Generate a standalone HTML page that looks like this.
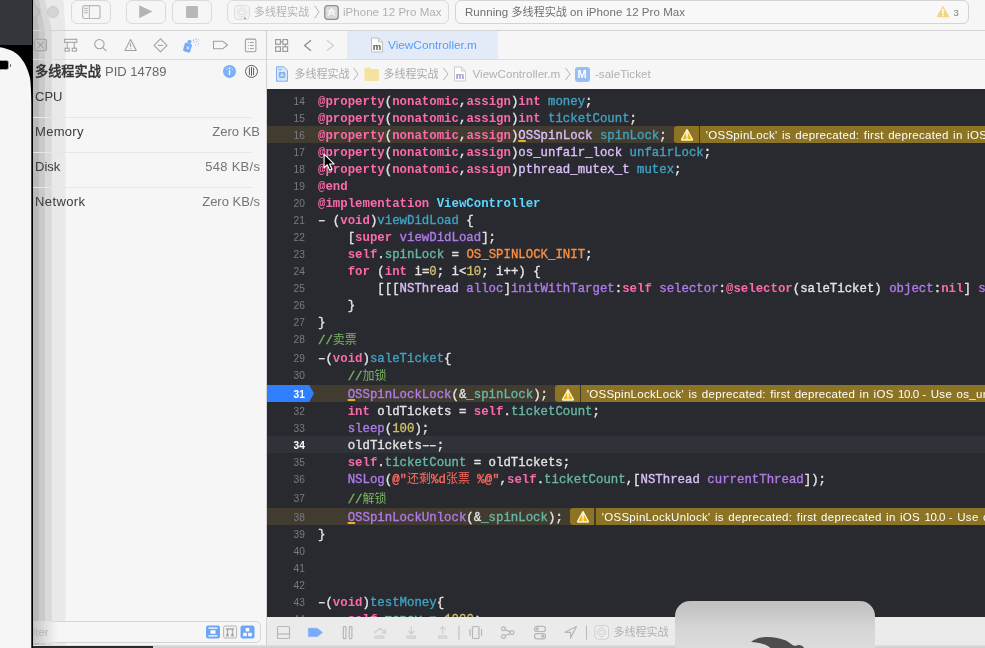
<!DOCTYPE html>
<html lang="zh">
<head>
<meta charset="utf-8">
<title>Xcode</title>
<style>
*{box-sizing:border-box;margin:0;padding:0}
html,body{width:985px;height:648px;overflow:hidden;background:#f6f6f6}
body{position:relative;font-family:"Liberation Sans","Noto Sans CJK SC",sans-serif;font-size:13px;color:#3a3a3a}
.abs{position:absolute}
/* left simulator strip */
#sim{left:0;top:0;width:33px;height:648px;background:#000}
#simtop{left:0;top:0;width:31.5px;height:44.5px;background:#35363b}
#batt{left:-2px;top:60.3px;width:10.5px;height:9.4px;background:#000;border:1px solid #a6a6a6;border-radius:2.5px}
/* window */
#win{left:33px;top:0;width:952px;height:648px;background:#f6f6f6}
.hl{background:#d4d4d4;height:1px}
.btn{border:1px solid #dadada;border-radius:6px;top:-0.5px;height:24px;background:#f6f6f6}
.tl{width:12px;height:12px;border-radius:50%;background:#d4d4d4;border:1px solid #cacaca;top:6px}
.t11{font-size:11px;white-space:nowrap}
.nav{font-size:13px;white-space:nowrap;line-height:16px}
.val{color:#757575;text-align:right;right:725px}
/* editor */
#ed{left:267px;top:89px;width:718px;height:528px;background:#292a30;overflow:hidden}
.row{left:0;width:718px;height:17px}
.ln{position:absolute;left:0;width:37.8px;text-align:right;font-family:"Liberation Sans",sans-serif;font-size:11.3px;line-height:16.4px;height:18px;color:#7a7b80;transform:scaleX(0.9);transform-origin:100% 50%}
.ln.cur{color:#fff;font-weight:bold}
.ln.bp{color:#fff;font-weight:bold}
.cl{position:absolute;left:51px;height:18px;line-height:18px;white-space:pre;font-family:"Liberation Mono","Noto Sans CJK SC",monospace;font-size:12.36px;color:#e4e4e6;-webkit-text-stroke:0.35px}
.cl span{display:inline}
.k{color:#fd6aab;font-weight:bold;-webkit-text-stroke:0}
.p{color:#e4e4e6}
.d{color:#41a1c0}
.t{color:#5dd8ff;font-weight:bold;-webkit-text-stroke:0}
.j{color:#67b7a4}
.u{color:#b07bea}
.uu{color:#b07bea;text-decoration:underline;text-decoration-color:#e2b325;text-decoration-thickness:2px;text-underline-offset:1.1px}
.c{color:#dabff8}
.cu{color:#dabff8;text-decoration:underline;text-decoration-color:#e2b325;text-decoration-thickness:2px;text-underline-offset:1.1px}
.n{color:#d0bf69}
.cl span.z{font-size:12px;-webkit-text-stroke:0}
.cl span.h{display:inline-block;transform:scaleX(1.55)}
.m{color:#fd8f3f}
.s{color:#fc6a5d}
.g{color:#7ab55c}
.wb{letter-spacing:0.3px;word-spacing:0.9px;height:17px;background:#8c7424;color:#fff;font-size:11.5px;line-height:18.2px;white-space:nowrap;overflow:hidden;font-family:"Liberation Sans",sans-serif}
.dbg{stroke:#b7b7b7;fill:none;stroke-width:1.2}
.dbl{stroke:#cecece;fill:none;stroke-width:1.2}
</style>
</head>
<body>
<div id="root" style="position:absolute;left:0;top:0;width:985px;height:648px;will-change:transform">
<!-- simulator strip on left -->
<div id="sim" class="abs"></div>
<div id="simtop" class="abs"></div>
<svg class="abs" style="left:0;top:0" width="33" height="648" viewBox="0 0 33 648"><path d="M0 47.3C4 47.9 7 48.9 10 50.1C14 51.7 17.5 54.2 20 56.9C22.5 59.6 24.5 62.9 26 66.2C27.8 70.1 29.2 74.4 30 77.8C30.8 83 31.2 92 31.3 104V648H0Z" fill="#f6f6f6"/></svg>
<div id="batt" class="abs"></div>
<div class="abs" style="left:9.8px;top:63.5px;width:1.2px;height:3px;background:#555;border-radius:0 1px 1px 0"></div>

<div id="win" class="abs"></div>
<svg class="abs" style="left:33px;top:0" width="40" height="646" viewBox="33 0 40 646">
<polygon points="33,0 63.5,0 65.4,30 65.4,646 33,646" fill="#e9e9e9"/>
<polygon points="33,0 45,0 51.8,30 51.8,646 33,646" fill="#d9d9d9"/>
<polygon points="33,0 39,0 44.9,30 44.9,646 33,646" fill="#c9c9c9"/>
<polygon points="33,0 34.5,0 38.9,30 38.9,646 33,646" fill="#b9b9b9"/>
</svg>

<!-- toolbar -->
<div class="abs" style="left:33px;top:0;width:30px;height:30px;overflow:hidden"><div class="abs tl" style="left:-5.5px;background:#bfbfbf;border-color:#b5b5b5"></div></div>
<div class="abs tl" style="left:47px"></div>
<div class="abs btn" style="left:71px;width:40px"></div>
<svg class="abs" style="left:82px;top:4px" width="19" height="16" viewBox="0 0 19 16"><rect x="0.6" y="1.6" width="17.4" height="12.9" rx="2" fill="none" stroke="#b7b7b7" stroke-width="1.2"/><path d="M7.4 1.6v12.9M2.3 4.4h3.4M2.3 6.5h3.4M2.3 8.6h3.4" stroke="#b7b7b7" stroke-width="1.1" fill="none"/></svg>
<div class="abs btn" style="left:126px;width:40px"></div>
<svg class="abs" style="left:138px;top:4px" width="16" height="16" viewBox="0 0 16 16"><path d="M1.2 1.2L14.4 7.6L1.2 14.2Z" fill="#b5b5b5"/></svg>
<div class="abs btn" style="left:172px;width:40px"></div>
<div class="abs" style="left:186px;top:6px;width:12px;height:12px;background:#b8b8b8;border-radius:1px"></div>
<div class="abs btn" style="left:227px;width:222px"></div>
<svg class="abs" style="left:234px;top:4.5px" width="16" height="15" viewBox="0 0 16 15"><rect x="0.6" y="0.6" width="14.8" height="13.8" rx="3.4" fill="#f4f4f4" stroke="#dcdcdc" stroke-width="1"/><circle cx="8" cy="7.5" r="4.6" fill="none" stroke="#dadada" stroke-width="0.9"/><circle cx="8" cy="7.5" r="2.6" fill="none" stroke="#dadada" stroke-width="0.9"/><circle cx="11" cy="13.2" r="0.7" fill="#555"/></svg>
<div class="abs t11" style="left:254px;top:4px;line-height:16px;color:#b3b3b3">多线程实战</div>
<svg class="abs" style="left:313px;top:4px" width="8" height="16" viewBox="0 0 8 16"><path d="M1.5 1.5L6 8L1.5 14.5" stroke="#b3b3b3" stroke-width="1" fill="none"/></svg>
<svg class="abs" style="left:324px;top:4.5px" width="15" height="15" viewBox="0 0 15 15"><rect x="0.7" y="0.7" width="13.6" height="13.6" rx="3" fill="#d9d9d9" stroke="#8e8e8e" stroke-width="1.3"/><path d="M4 11L7.5 3.6L11 11M5 8.6h5M3.4 6.2h8" stroke="#fafafa" stroke-width="1.2" fill="none"/></svg>
<div class="abs t11" id="dev" style="left:343px;top:4px;line-height:16px;color:#b0b0b0;font-size:11.5px;letter-spacing:0.04px">iPhone 12 Pro Max</div>
<div class="abs btn" style="left:454.6px;width:514px;top:-0.5px;height:24.2px;border-color:#d4d4d4;background:#f8f8f8"></div>
<div class="abs t11" id="run" style="left:465px;top:4px;line-height:16px;color:#707070;font-size:11.5px;letter-spacing:0.06px">Running <span style="font-size:11px">多线程实战</span> on iPhone 12 Pro Max</div>
<svg class="abs" style="left:936px;top:5px" width="14" height="13" viewBox="0 0 14 13"><path d="M7 0.8L13.2 11.6Q13.4 12.3 12.6 12.3H1.4Q0.6 12.3 0.8 11.6Z" fill="#f3d685"/><path d="M7 4.2v4.2" stroke="#fff" stroke-width="1.4" stroke-linecap="round"/><circle cx="7" cy="10.4" r="0.85" fill="#fff"/></svg>
<div class="abs" style="left:953.5px;top:6px;font-size:9.5px;line-height:14px;color:#7c7c7c">3</div>
<div class="abs hl" style="left:33px;top:30px;width:952px"></div>

<!-- navigator icon bar -->
<svg class="abs" style="left:33px;top:37px" width="234" height="18" viewBox="0 0 234 18">
<g fill="none" stroke="#a0a0a0" stroke-width="1.05">
<rect x="1.8" y="2.2" width="11.6" height="11.6" rx="1.5" fill="#c6c6c6" stroke="#9e9e9e"/><path d="M4 4.5L11 11.5M11 4.5L4 11.5" stroke="#9e9e9e"/><circle cx="7.6" cy="8" r="1" fill="#9e9e9e" stroke="none"/>
<rect x="31.6" y="2.3" width="12.2" height="3"/><path d="M34.2 5.3v6M41.2 5.3v6"/><rect x="32" y="11.2" width="4.2" height="2.9"/><rect x="39.2" y="11.2" width="4.2" height="2.9"/>
<circle cx="66.4" cy="7.1" r="4.7"/><path d="M69.8 10.6L73.4 14.2"/>
<path d="M97.6 2.4L103.3 13.4H91.9Z" stroke-linejoin="round"/><path d="M97.6 6.2v3.8M97.6 11.2v0.9"/>
<path d="M127.5 1.9L134 8.4L127.5 14.9L121 8.4Z" stroke-linejoin="round"/><path d="M125 8.4h5"/>
<path d="M180.5 4.2h9L194.5 8L189.5 11.8h-9Z" stroke-linejoin="round"/>
<rect x="212.4" y="2.1" width="10.5" height="12.6" rx="1.2"/><path d="M214.9 5.4h0.8M217.1 5.4h3.6M214.9 8.4h0.8M217.1 8.4h3.6M214.9 11.4h0.8M217.1 11.4h3.6"/>
</g>
<g><rect x="151" y="6.2" width="7.4" height="9" rx="1.4" fill="#79abf7" transform="rotate(16 155 10)"/><rect x="153.2" y="3" width="3.6" height="3" fill="#79abf7" transform="rotate(16 155 10)"/><path d="M153.6 9.5l2.6 2.8M156.2 9.5l-2.6 2.8" stroke="#fff" stroke-width="0.8"/>
<g fill="#8fb8f5"><circle cx="160.5" cy="3.2" r="0.7"/><circle cx="162.8" cy="2" r="0.7"/><circle cx="161.3" cy="5.6" r="0.7"/><circle cx="163.8" cy="4.6" r="0.7"/><circle cx="165.6" cy="2.8" r="0.6"/><circle cx="162.8" cy="8" r="0.6"/><circle cx="165.4" cy="6.8" r="0.6"/></g></g>
</svg>
<div class="abs hl" style="left:33px;top:59px;width:233px;background:#dcdcdc"></div>

<!-- navigator rows -->
<div class="abs nav" id="n1" style="left:35px;top:63.5px;font-size:13.2px;color:#333;font-weight:500;-webkit-text-stroke:0.35px #333">多线程实战</div>
<div class="abs nav" id="n2" style="left:105px;top:63.5px;color:#6a6a6a">PID 14789</div>
<svg class="abs" style="left:222px;top:64px" width="38" height="15" viewBox="0 0 38 15"><circle cx="7.5" cy="7.4" r="6.5" fill="#7db0f8"/><path d="M7.5 6.2v4.6" stroke="#fff" stroke-width="1.4"/><circle cx="7.5" cy="4.3" r="0.9" fill="#fff"/><path d="M4.2 6A3.6 3.6 0 0 1 5.6 4M9.4 4A3.6 3.6 0 0 1 10.8 6" stroke="#d4e4fc" stroke-width="0.8" fill="none"/><circle cx="29.5" cy="7.4" r="6" fill="none" stroke="#5e5e5e" stroke-width="1"/><path d="M27.4 3.6v7.6M29.5 3v8.8M31.6 3.6v7.6" stroke="#5e5e5e" stroke-width="1"/></svg>
<div class="abs nav" id="n3" style="left:35px;top:88.5px">CPU</div>
<div class="abs hl" style="left:33px;top:117px;width:219px;background:#e6e6e6"></div>
<div class="abs nav" id="n4" style="letter-spacing:0.3px;left:35px;top:123.5px">Memory</div>
<div class="abs nav val" id="v4" style="top:123.5px">Zero KB</div>
<div class="abs hl" style="left:33px;top:152px;width:219px;background:#e6e6e6"></div>
<div class="abs nav" id="n5" style="left:35px;top:158.5px">Disk</div>
<div class="abs nav val" id="v5" style="letter-spacing:0.3px;margin-right:-0.3px;top:158.5px">548 KB/s</div>
<div class="abs hl" style="left:33px;top:187px;width:219px;background:#e6e6e6"></div>
<div class="abs nav" id="n6" style="letter-spacing:0.4px;left:35px;top:193.5px">Network</div>
<div class="abs nav val" id="v6" style="top:193.5px">Zero KB/s</div>

<!-- filter field -->
<div class="abs" style="left:20px;top:621px;width:241px;height:22px;border:1px solid #d4d4d4;border-radius:5px;background:#f6f6f6;clip-path:inset(0 0 0 13px)"></div>
<div class="abs" style="left:33px;top:621px;width:25px;height:22px;background:linear-gradient(90deg,#c4c4c4,#e4e4e4 60%,rgba(246,246,246,0))"></div>
<div class="abs" id="flt" style="left:23.1px;top:624px;font-size:11.5px;line-height:16px;color:#b4b4b4;clip-path:inset(0 0 0 9.9px)">Filter</div>
<svg class="abs" style="left:205.3px;top:624px" width="52" height="16" viewBox="0 0 52 16">
<rect x="1" y="1.5" width="14" height="13" rx="2" fill="#6ea6f7"/><path d="M3.5 4.2h9M3.5 11.8h9" stroke="#fff" stroke-width="1.2"/><rect x="5.5" y="6.3" width="5" height="3.4" fill="#fff"/>
<rect x="18.6" y="2" width="13" height="12" rx="1.5" fill="#f2f2f2" stroke="#b5b5b5" stroke-width="1"/><path d="M21 5h8M22.5 5v6M27.5 5v6" stroke="#a8a8a8" stroke-width="1.3" fill="none"/><rect x="21.2" y="10" width="2.6" height="2.4" fill="#a8a8a8"/><rect x="26.2" y="10" width="2.6" height="2.4" fill="#a8a8a8"/>
<rect x="35.5" y="1.5" width="14" height="13" rx="2" fill="#6ea6f7"/><rect x="40.7" y="4" width="3.6" height="3.4" fill="#fff"/><rect x="38.2" y="8.8" width="3.6" height="3.4" fill="#fff"/><rect x="43.2" y="8.8" width="3.6" height="3.4" fill="#fff"/>
</svg>

<!-- divider nav / editor -->
<div class="abs" style="left:266px;top:31px;width:1px;height:615px;background:#d2d2d2"></div>

<!-- tab bar -->
<div class="abs" style="left:347px;top:31px;width:151px;height:28px;background:#e3ebf9"></div>
<svg class="abs" style="left:274px;top:37px" width="64" height="17" viewBox="0 0 64 17"><g fill="none" stroke="#999" stroke-width="1.15"><rect x="1.6" y="2.6" width="4.8" height="4.6"/><rect x="8.8" y="2.6" width="4.8" height="4.6"/><rect x="1.6" y="9.8" width="4.8" height="4.6"/><rect x="8.8" y="9.8" width="4.8" height="4.6"/><path d="M6.4 4.9h2.4M11.2 7.2v2.6"/></g><path d="M37 3.2L30.6 8.5L37 13.8" fill="none" stroke="#8e8e8e" stroke-width="1.3"/><path d="M53 3.2L59.4 8.5L53 13.8" fill="none" stroke="#cfcfcf" stroke-width="1.3"/></svg>
<svg class="abs" style="left:370px;top:37px" width="14" height="16" viewBox="0 0 14 16"><path d="M1.5 1h7L12.5 5V15H1.5Z" fill="#fdfdfd" stroke="#b9b9b9" stroke-width="0.9" stroke-linejoin="round"/><path d="M8.5 1V5H12.5" fill="#e9e9e9" stroke="#b9b9b9" stroke-width="0.8" stroke-linejoin="round"/><text x="7" y="13.2" text-anchor="middle" font-family="Liberation Sans,sans-serif" font-size="9.5" font-weight="bold" fill="#555">m</text></svg>
<div class="abs t11" id="tab" style="left:388px;top:37px;line-height:16px;color:#5a9bf6;font-size:11.8px">ViewController.m</div>
<div class="abs hl" style="left:267px;top:59px;width:718px;background:#dedede"></div>

<!-- jump bar -->
<svg class="abs" style="left:275px;top:66px" width="14" height="16" viewBox="0 0 14 16"><path d="M1.5 0.8h7.5L12.5 4.3V15.2H1.5Z" fill="#d7e7fb" stroke="#7fb0f4" stroke-width="1" stroke-linejoin="round"/><rect x="3.8" y="6" width="6.4" height="6" rx="1" fill="#7fb0f4"/><path d="M5 10.6L7 7.4L9 10.6M5.8 9.6h2.4" stroke="#eaf2fd" stroke-width="0.8" fill="none"/><path d="M3.6 3.4h3" stroke="#7fb0f4" stroke-width="1"/></svg>
<div class="abs t11" id="j1" style="left:294.5px;top:66px;line-height:16px;color:#ababab">多线程实战</div>
<svg class="abs" style="left:352px;top:66px" width="8" height="16" viewBox="0 0 8 16"><path d="M1.5 2L6 8L1.5 14" stroke="#b5b5b5" stroke-width="1" fill="none"/></svg>
<svg class="abs" style="left:364px;top:66px" width="16" height="16" viewBox="0 0 16 16"><path d="M0.5 3Q0.5 1.5 2 1.5H5.5L7 3H13.5Q15 3 15 4.5V13.5Q15 15 13.5 15H2Q0.5 15 0.5 13.5Z" fill="#f6e3a1"/><path d="M0.5 4.8H15" stroke="#f0d689" stroke-width="0.6"/></svg>
<div class="abs t11" id="j2" style="left:383.5px;top:66px;line-height:16px;color:#ababab">多线程实战</div>
<svg class="abs" style="left:441.5px;top:66px" width="8" height="16" viewBox="0 0 8 16"><path d="M1.5 2L6 8L1.5 14" stroke="#b5b5b5" stroke-width="1" fill="none"/></svg>
<svg class="abs" style="left:453px;top:66px" width="14" height="16" viewBox="0 0 14 16"><path d="M1.5 1h7L12.5 5V15H1.5Z" fill="#fdfdfd" stroke="#c6c6c6" stroke-width="0.9" stroke-linejoin="round"/><path d="M8.5 1V5H12.5" fill="#ececec" stroke="#c6c6c6" stroke-width="0.8" stroke-linejoin="round"/><text x="7" y="13.2" text-anchor="middle" font-family="Liberation Sans,sans-serif" font-size="9.5" font-weight="bold" fill="#9d86c9">m</text></svg>
<div class="abs t11" id="j3" style="left:472.5px;top:66px;line-height:16px;color:#b0b0b0;font-size:11.65px">ViewController.m</div>
<svg class="abs" style="left:564px;top:66px" width="8" height="16" viewBox="0 0 8 16"><path d="M1.5 2L6 8L1.5 14" stroke="#b5b5b5" stroke-width="1" fill="none"/></svg>
<div class="abs" style="left:574.5px;top:66.5px;width:15px;height:15px;border-radius:3px;background:#97bff6;color:#fff;font-size:11px;font-weight:bold;line-height:15px;text-align:center">M</div>
<div class="abs t11" id="j4" style="left:595px;top:66px;line-height:16px;color:#b0b0b0;font-size:11.6px">-saleTicket</div>

<!-- editor -->
<div id="ed" class="abs">
<div class="abs row" style="top:37px;background:#423b2f"></div>
<div class="abs row" style="top:296px;background:#423b2f"></div>
<div class="abs row" style="top:347px;background:#2f3239"></div>
<div class="abs row" style="top:419px;background:#423b2f"></div>
<svg class="abs" style="left:0;top:296px" width="48" height="17" viewBox="0 0 48 17"><path d="M0 0H42.2L47 8.5L42.2 17H0Z" fill="#307fff"/></svg>
<div class="ln" style="top:4px">14</div>
<div class="cl" style="top:4px"><span class="k">@property</span><span class="p">(</span><span class="k">nonatomic</span><span class="p">,</span><span class="k">assign</span><span class="p">)</span><span class="k">int</span><span class="p"> </span><span class="d">money</span><span class="p">;</span></div>
<div class="ln" style="top:21px">15</div>
<div class="cl" style="top:21px"><span class="k">@property</span><span class="p">(</span><span class="k">nonatomic</span><span class="p">,</span><span class="k">assign</span><span class="p">)</span><span class="k">int</span><span class="p"> </span><span class="d">ticketCount</span><span class="p">;</span></div>
<div class="ln" style="top:38px">16</div>
<div class="cl" style="top:38px"><span class="k">@property</span><span class="p">(</span><span class="k">nonatomic</span><span class="p">,</span><span class="k">assign</span><span class="p">)</span><span class="cu">O</span><span class="c">SSpinLock</span><span class="p"> </span><span class="d">spinLock</span><span class="p">;</span></div>
<div class="ln" style="top:55px">17</div>
<div class="cl" style="top:55px"><span class="k">@property</span><span class="p">(</span><span class="k">nonatomic</span><span class="p">,</span><span class="k">assign</span><span class="p">)</span><span class="c">os_unfair_lock</span><span class="p"> </span><span class="d">unfairLock</span><span class="p">;</span></div>
<div class="ln" style="top:72px">18</div>
<div class="cl" style="top:72px"><span class="k">@property</span><span class="p">(</span><span class="k">nonatomic</span><span class="p">,</span><span class="k">assign</span><span class="p">)</span><span class="c">pthread_mutex_t</span><span class="p"> </span><span class="d">mutex</span><span class="p">;</span></div>
<div class="ln" style="top:89px">19</div>
<div class="cl" style="top:89px"><span class="k">@end</span></div>
<div class="ln" style="top:106px">20</div>
<div class="cl" style="top:106px"><span class="k">@implementation</span><span class="p"> </span><span class="t">ViewController</span></div>
<div class="ln" style="top:123px">21</div>
<div class="cl" style="top:123px"><span class="h">-</span><span class="p"> (</span><span class="k">void</span><span class="p">)</span><span class="d">viewDidLoad</span><span class="p"> {</span></div>
<div class="ln" style="top:140px">22</div>
<div class="cl" style="top:140px"><span class="p">    [</span><span class="k">super</span><span class="p"> </span><span class="u">viewDidLoad</span><span class="p">];</span></div>
<div class="ln" style="top:157px">23</div>
<div class="cl" style="top:157px"><span class="p">    </span><span class="k">self</span><span class="p">.</span><span class="j">spinLock</span><span class="p"> = </span><span class="m">OS_SPINLOCK_INIT</span><span class="p">;</span></div>
<div class="ln" style="top:174px">24</div>
<div class="cl" style="top:174px"><span class="p">    </span><span class="k">for</span><span class="p"> (</span><span class="k">int</span><span class="p"> i=</span><span class="n">0</span><span class="p">; i&lt;</span><span class="n">10</span><span class="p">; i++) {</span></div>
<div class="ln" style="top:191px">25</div>
<div class="cl" style="top:191px"><span class="p">        [[[</span><span class="c">NSThread</span><span class="p"> </span><span class="u">alloc</span><span class="p">]</span><span class="u">initWithTarget</span><span class="p">:</span><span class="k">self</span><span class="p"> </span><span class="u">selector</span><span class="p">:</span><span class="k">@selector</span><span class="p">(saleTicket) </span><span class="u">object</span><span class="p">:</span><span class="k">nil</span><span class="p">] </span><span class="u">s</span></div>
<div class="ln" style="top:208px">26</div>
<div class="cl" style="top:208px"><span class="p">    }</span></div>
<div class="ln" style="top:225px">27</div>
<div class="cl" style="top:225px"><span class="p">}</span></div>
<div class="ln" style="top:242px">28</div>
<div class="cl" style="top:243px"><span class="g">//<span class="z">卖票</span></span></div>
<div class="ln" style="top:261px">29</div>
<div class="cl" style="top:261px"><span class="h">-</span><span class="p">(</span><span class="k">void</span><span class="p">)</span><span class="d">saleTicket</span><span class="p">{</span></div>
<div class="ln" style="top:278px">30</div>
<div class="cl" style="top:279px"><span class="g">    //<span class="z">加锁</span></span></div>
<div class="ln bp" style="top:297px">31</div>
<div class="cl" style="top:297px"><span class="p">    </span><span class="uu">O</span><span class="u">SSpinLockLock</span><span class="p">(&amp;</span><span class="j">_spinLock</span><span class="p">);</span></div>
<div class="ln" style="top:314px">32</div>
<div class="cl" style="top:314px"><span class="p">    </span><span class="k">int</span><span class="p"> oldTickets = </span><span class="k">self</span><span class="p">.</span><span class="j">ticketCount</span><span class="p">;</span></div>
<div class="ln" style="top:331px">33</div>
<div class="cl" style="top:331px"><span class="p">    </span><span class="u">sleep</span><span class="p">(</span><span class="n">100</span><span class="p">);</span></div>
<div class="ln cur" style="top:348px">34</div>
<div class="cl" style="top:348px"><span class="p">    oldTickets</span><span class="h">-</span><span class="h">-</span><span class="p">;</span></div>
<div class="ln" style="top:365px">35</div>
<div class="cl" style="top:365px"><span class="p">    </span><span class="k">self</span><span class="p">.</span><span class="j">ticketCount</span><span class="p"> = oldTickets;</span></div>
<div class="ln" style="top:382px">36</div>
<div class="cl" style="top:382px"><span class="p">    </span><span class="u">NSLog</span><span class="p">(</span><span class="s">@"<span class="z">还剩</span>%d<span class="z">张票</span> %@"</span><span class="p">,</span><span class="k">self</span><span class="p">.</span><span class="j">ticketCount</span><span class="p">,[</span><span class="c">NSThread</span><span class="p"> </span><span class="u">currentThread</span><span class="p">]);</span></div>
<div class="ln" style="top:401px">37</div>
<div class="cl" style="top:402px"><span class="g">    //<span class="z">解锁</span></span></div>
<div class="ln" style="top:420px">38</div>
<div class="cl" style="top:420px"><span class="p">    </span><span class="uu">O</span><span class="u">SSpinLockUnlock</span><span class="p">(&amp;</span><span class="j">_spinLock</span><span class="p">);</span></div>
<div class="ln" style="top:437px">39</div>
<div class="cl" style="top:437px"><span class="p">}</span></div>
<div class="ln" style="top:454px">40</div>
<div class="ln" style="top:471px">41</div>
<div class="ln" style="top:488px">42</div>
<div class="ln" style="top:505px">43</div>
<div class="cl" style="top:505px"><span class="h">-</span><span class="p">(</span><span class="k">void</span><span class="p">)</span><span class="d">testMoney</span><span class="p">{</span></div>
<div class="ln" style="top:522px">44</div>
<div class="cl" style="top:522px"><span class="p">    </span><span class="k">self</span><span class="p">.</span><span class="j">money</span><span class="p"> = </span><span class="n">1000</span><span class="p">;</span></div>
<div class="abs wb" style="left:407px;top:37px;width:25px;border-radius:3px 0 0 3px"></div>
<div class="abs wb" style="left:433.2px;top:37px;width:290px;padding-left:5.5px">'OSSpinLock' is deprecated: first deprecated in iOS 10.0</div>
<div class="abs wb" style="left:288.3px;top:296px;width:24.4px;border-radius:3px 0 0 3px"></div>
<div class="abs wb" style="left:314.2px;top:296px;width:410px;padding-left:5.5px">'OSSpinLockLock' is deprecated: first deprecated in iOS <span style="letter-spacing:-0.45px">10.0 </span>- Use os_unfair_lock_lock()</div>
<div class="abs wb" style="left:303.3px;top:419px;width:24.2px;border-radius:3px 0 0 3px"></div>
<div class="abs wb" style="left:329.2px;top:419px;width:400px;padding-left:5.5px">'OSSpinLockUnlock' is deprecated: first deprecated in iOS <span style="letter-spacing:-0.45px">10.0 </span>- Use os_unfair_lock_unlock()</div>
</div>
<!-- warning glyphs -->
<svg class="abs" style="left:680.2px;top:128px" width="14" height="13" viewBox="0 0 14 13"><path d="M7 1.6L12.4 11.2Q12.7 12 11.8 12H2.2Q1.3 12 1.6 11.2Z" fill="#f2b80f" stroke="#fbf3d8" stroke-width="1.3" stroke-linejoin="round"/><path d="M7 4.6v3.6" stroke="#fff" stroke-width="1.4" stroke-linecap="round"/><circle cx="7" cy="10.1" r="0.85" fill="#fff"/></svg>
<svg class="abs" style="left:560.5px;top:387.5px" width="14" height="13" viewBox="0 0 14 13"><path d="M7 1.6L12.4 11.2Q12.7 12 11.8 12H2.2Q1.3 12 1.6 11.2Z" fill="#f2b80f" stroke="#fbf3d8" stroke-width="1.3" stroke-linejoin="round"/><path d="M7 4.6v3.6" stroke="#fff" stroke-width="1.4" stroke-linecap="round"/><circle cx="7" cy="10.1" r="0.85" fill="#fff"/></svg>
<svg class="abs" style="left:575.5px;top:509.8px" width="14" height="13" viewBox="0 0 14 13"><path d="M7 1.6L12.4 11.2Q12.7 12 11.8 12H2.2Q1.3 12 1.6 11.2Z" fill="#f2b80f" stroke="#fbf3d8" stroke-width="1.3" stroke-linejoin="round"/><path d="M7 4.6v3.6" stroke="#fff" stroke-width="1.4" stroke-linecap="round"/><circle cx="7" cy="10.1" r="0.85" fill="#fff"/></svg>

<!-- mouse pointer -->
<svg class="abs" style="left:322.5px;top:152.5px" width="12.5" height="18.7" viewBox="0 0 14 21"><path d="M1.2 1.2V16.6L4.8 13.2L7.4 19.4L10 18.3L7.4 12.3H12.4Z" fill="#000" stroke="#fff" stroke-width="1.2" stroke-linejoin="round"/></svg>

<!-- debug bar -->
<div class="abs" style="left:267px;top:617px;width:718px;height:28px;background:#ebebeb"></div>
<svg class="abs" style="left:267px;top:622px" width="350" height="20" viewBox="0 0 350 20">
<g class="dbg"><rect x="10.5" y="4.5" width="12" height="12" rx="1"/><path d="M10.5 12h12"/></g>
<path d="M41.4 6.3H50.4L55.4 10.45L50.4 14.6H41.4Z" fill="#7aabf8" stroke="#7aabf8" stroke-width="0.6" stroke-linejoin="round"/>
<g class="dbg"><rect x="76.3" y="4.6" width="2.6" height="12" rx="0.6"/><rect x="82.3" y="4.6" width="2.6" height="12" rx="0.6"/></g>
<g class="dbl"><rect x="108" y="14.2" width="9" height="2" rx="0.8"/><path d="M107 11L113 6.2L118.5 10.5M118.5 7v3.8h-3.6"/>
<rect x="140" y="14.2" width="8.5" height="2" rx="0.8"/><path d="M144.3 4.5v7.4M141.3 9l3 3l3-3"/>
<rect x="171.5" y="14.2" width="8.5" height="2" rx="0.8"/><path d="M175.7 12V4.6M172.7 7.5l3-3l3 3"/></g>
<path d="M192 3.5v14M319.5 3.5v14" stroke="#b9b9b9" stroke-width="1"/>
<g class="dbg"><rect x="205.5" y="4.5" width="6.5" height="12" rx="1"/><path d="M203 7v7M214.5 7v7"/>
<circle cx="236.5" cy="6.8" r="1.9"/><circle cx="236.5" cy="14.5" r="1.9"/><circle cx="245" cy="10.6" r="1.9"/><path d="M238.2 7.6l5 2.3M238.2 13.7l5-2.3"/>
<rect x="267.5" y="4.3" width="11" height="5.2" rx="2.6"/><rect x="267.5" y="11.6" width="11" height="5.2" rx="2.6"/><circle cx="270.3" cy="6.9" r="1"/><circle cx="275.7" cy="14.2" r="1"/>
<path d="M309.5 4.5L298 10.3h5.6v5.8Z" stroke-linejoin="round"/></g>
<g stroke="#cfcfcf" fill="none" stroke-width="1"><rect x="328" y="3.6" width="13.5" height="13.5" rx="3" fill="#f0f0f0"/><circle cx="334.7" cy="10.3" r="4.4"/><circle cx="334.7" cy="10.3" r="2.3"/></g>
</svg>
<div class="abs t11" id="dbt" style="left:613.5px;top:623.5px;line-height:16px;color:#b2b2b2">多线程实战</div>

<!-- bottom strip -->
<div class="abs" style="left:33px;top:645px;width:952px;height:3px;background:linear-gradient(180deg,#e4e4e4 0,#d8d8d8 1px,#cfcfcf 3px)"></div>
<div class="abs" style="left:33px;top:646px;width:120px;height:2px;background:#2a2a2c"></div>

<!-- HUD -->
<div class="abs" style="left:675px;top:600.5px;width:200px;height:70px;border-radius:15px;background:linear-gradient(180deg,#c0c0c0 0,#c9c9c9 14px,#d3d3d3 24px,#d9d9d9 36px,#dcdcdc 48px)"></div>
<svg class="abs" style="left:745px;top:630px" width="64" height="18" viewBox="745 630 64 18"><path d="M751 642C754 639.5 759 637 766 636.9C774 636.8 781 638.3 786 640.5C789.5 642.2 791.5 645 794 645.7C796 646 797.5 644.6 799.5 645C801.5 645.4 803.5 646.5 804 648H770.6C768 645.5 763 642.8 751 642Z" fill="#4d4d4d"/></svg>
</div>
</body>
</html>
